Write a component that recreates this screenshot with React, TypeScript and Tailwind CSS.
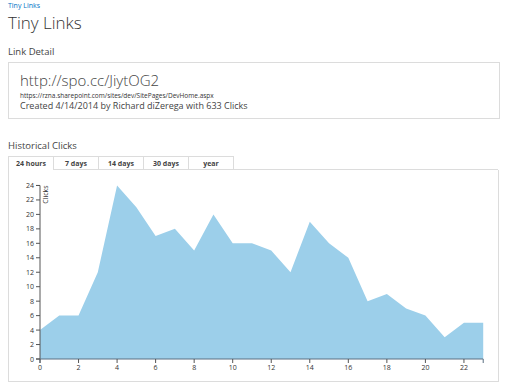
import React from "react";

const clicks = [4, 6, 6, 12, 24, 21, 17, 18, 15, 20, 16, 16, 15, 12, 19, 16, 14, 8, 9, 7, 6, 3, 5, 5];

const tabs = ["24 hours", "7 days", "14 days", "30 days", "year"];

// chart geometry, relative to the chart panel
const X0 = 31;
const Y0 = 189;
const XS = 19.27;
const YS = 7.23;

const ClicksChart = () => {
  const pts = clicks.map((v, i) => `${X0 + i * XS},${Y0 - v * YS}`);
  const area = `M${X0},${Y0} L${pts.join(" L")} L${X0 + 23 * XS},${Y0} Z`;
  const yTicks = [0, 2, 4, 6, 8, 10, 12, 14, 16, 18, 20, 22, 24];
  const xTicks = [0, 2, 4, 6, 8, 10, 12, 14, 16, 18, 20, 22];

  return (
    <svg width="489" height="210" className="block">
      <path d={area} fill="#9ccfea" />
      {/* y axis */}
      <path d={`M${X0 - 4},${Y0 - 24 * YS} H${X0} V${Y0} H${X0 - 4}`} fill="none" stroke="#555" strokeWidth="1" />
      {yTicks.map((t) => (
        <g key={t}>
          <line x1={X0 - 4} x2={X0} y1={Y0 - t * YS} y2={Y0 - t * YS} stroke="#555" />
          <text x={X0 - 6} y={Y0 - t * YS + 2.5} fontSize="7" textAnchor="end" fill="#333">
            {t}
          </text>
        </g>
      ))}
      <text
        transform={`translate(${X0 + 9},${Y0 - 24 * YS}) rotate(-90)`}
        fontSize="7"
        textAnchor="end"
        dy="0.71em"
        y="-6"
        fill="#333"
      >
        Clicks
      </text>
      {/* x axis */}
      <path d={`M${X0},${Y0 + 4} V${Y0} H${X0 + 23 * XS} V${Y0 + 4}`} fill="none" stroke="#5a6f82" strokeWidth="1" />
      {xTicks.map((t) => (
        <g key={t}>
          <line x1={X0 + t * XS} x2={X0 + t * XS} y1={Y0} y2={Y0 + 4} stroke="#555" />
          <text x={X0 + t * XS} y={Y0 + 11} fontSize="7" textAnchor="middle" fill="#333">
            {t}
          </text>
        </g>
      ))}
    </svg>
  );
};

const App = () => {
  return (
    <div className="w-[512px] h-[384px] bg-white overflow-hidden px-2 text-[#444]" style={{ fontFamily: '"Open Sans", "Noto Sans", sans-serif' }}>
      <div className="text-[7px] leading-[9px] pt-px text-[#0072c6]">Tiny Links</div>
      <h1 className="text-[17px] leading-[24px] font-light text-[#333] mt-[1px]">Tiny Links</h1>

      <h2 className="text-[9.5px] leading-[14px] mt-[10px]">Link Detail</h2>
      <div className="mt-[3px] w-[492px] h-[57px] border border-[#dcdcdc] px-[11px] pt-[8px]">
        <div className="text-[15px] leading-[19px] font-light">http://spo.cc/JiytOG2</div>
        <div className="text-[6.5px] leading-[9px] mt-[1px] text-[#333]">https://rzna.sharepoint.com/sites/dev/SitePages/DevHome.aspx</div>
        <div className="text-[9px] leading-[12px]">Created 4/14/2014 by Richard diZerega with 633 Clicks</div>
      </div>

      <h2 className="text-[9.5px] leading-[14px] mt-[20px]">Historical Clicks</h2>
      <div className="mt-[3px] flex">
        {tabs.map((t, i) => (
          <div
            key={t}
            className={
              i === 0
                ? "w-[46px] h-[14px] border border-b-0 border-[#dcdcdc] text-[7px] leading-[13px] font-bold text-center"
                : "w-[45px] h-[14px] border border-l-0 border-[#dcdcdc] text-[7px] leading-[13px] font-bold text-center"
            }
          >
            {t}
          </div>
        ))}
        <div className="flex-1 max-w-[264px] border-b border-[#dcdcdc]" />
      </div>
      <div className="w-[491px] h-[212px] border border-t-0 border-[#dcdcdc]">
        <ClicksChart />
      </div>
    </div>
  );
};

export default App;
